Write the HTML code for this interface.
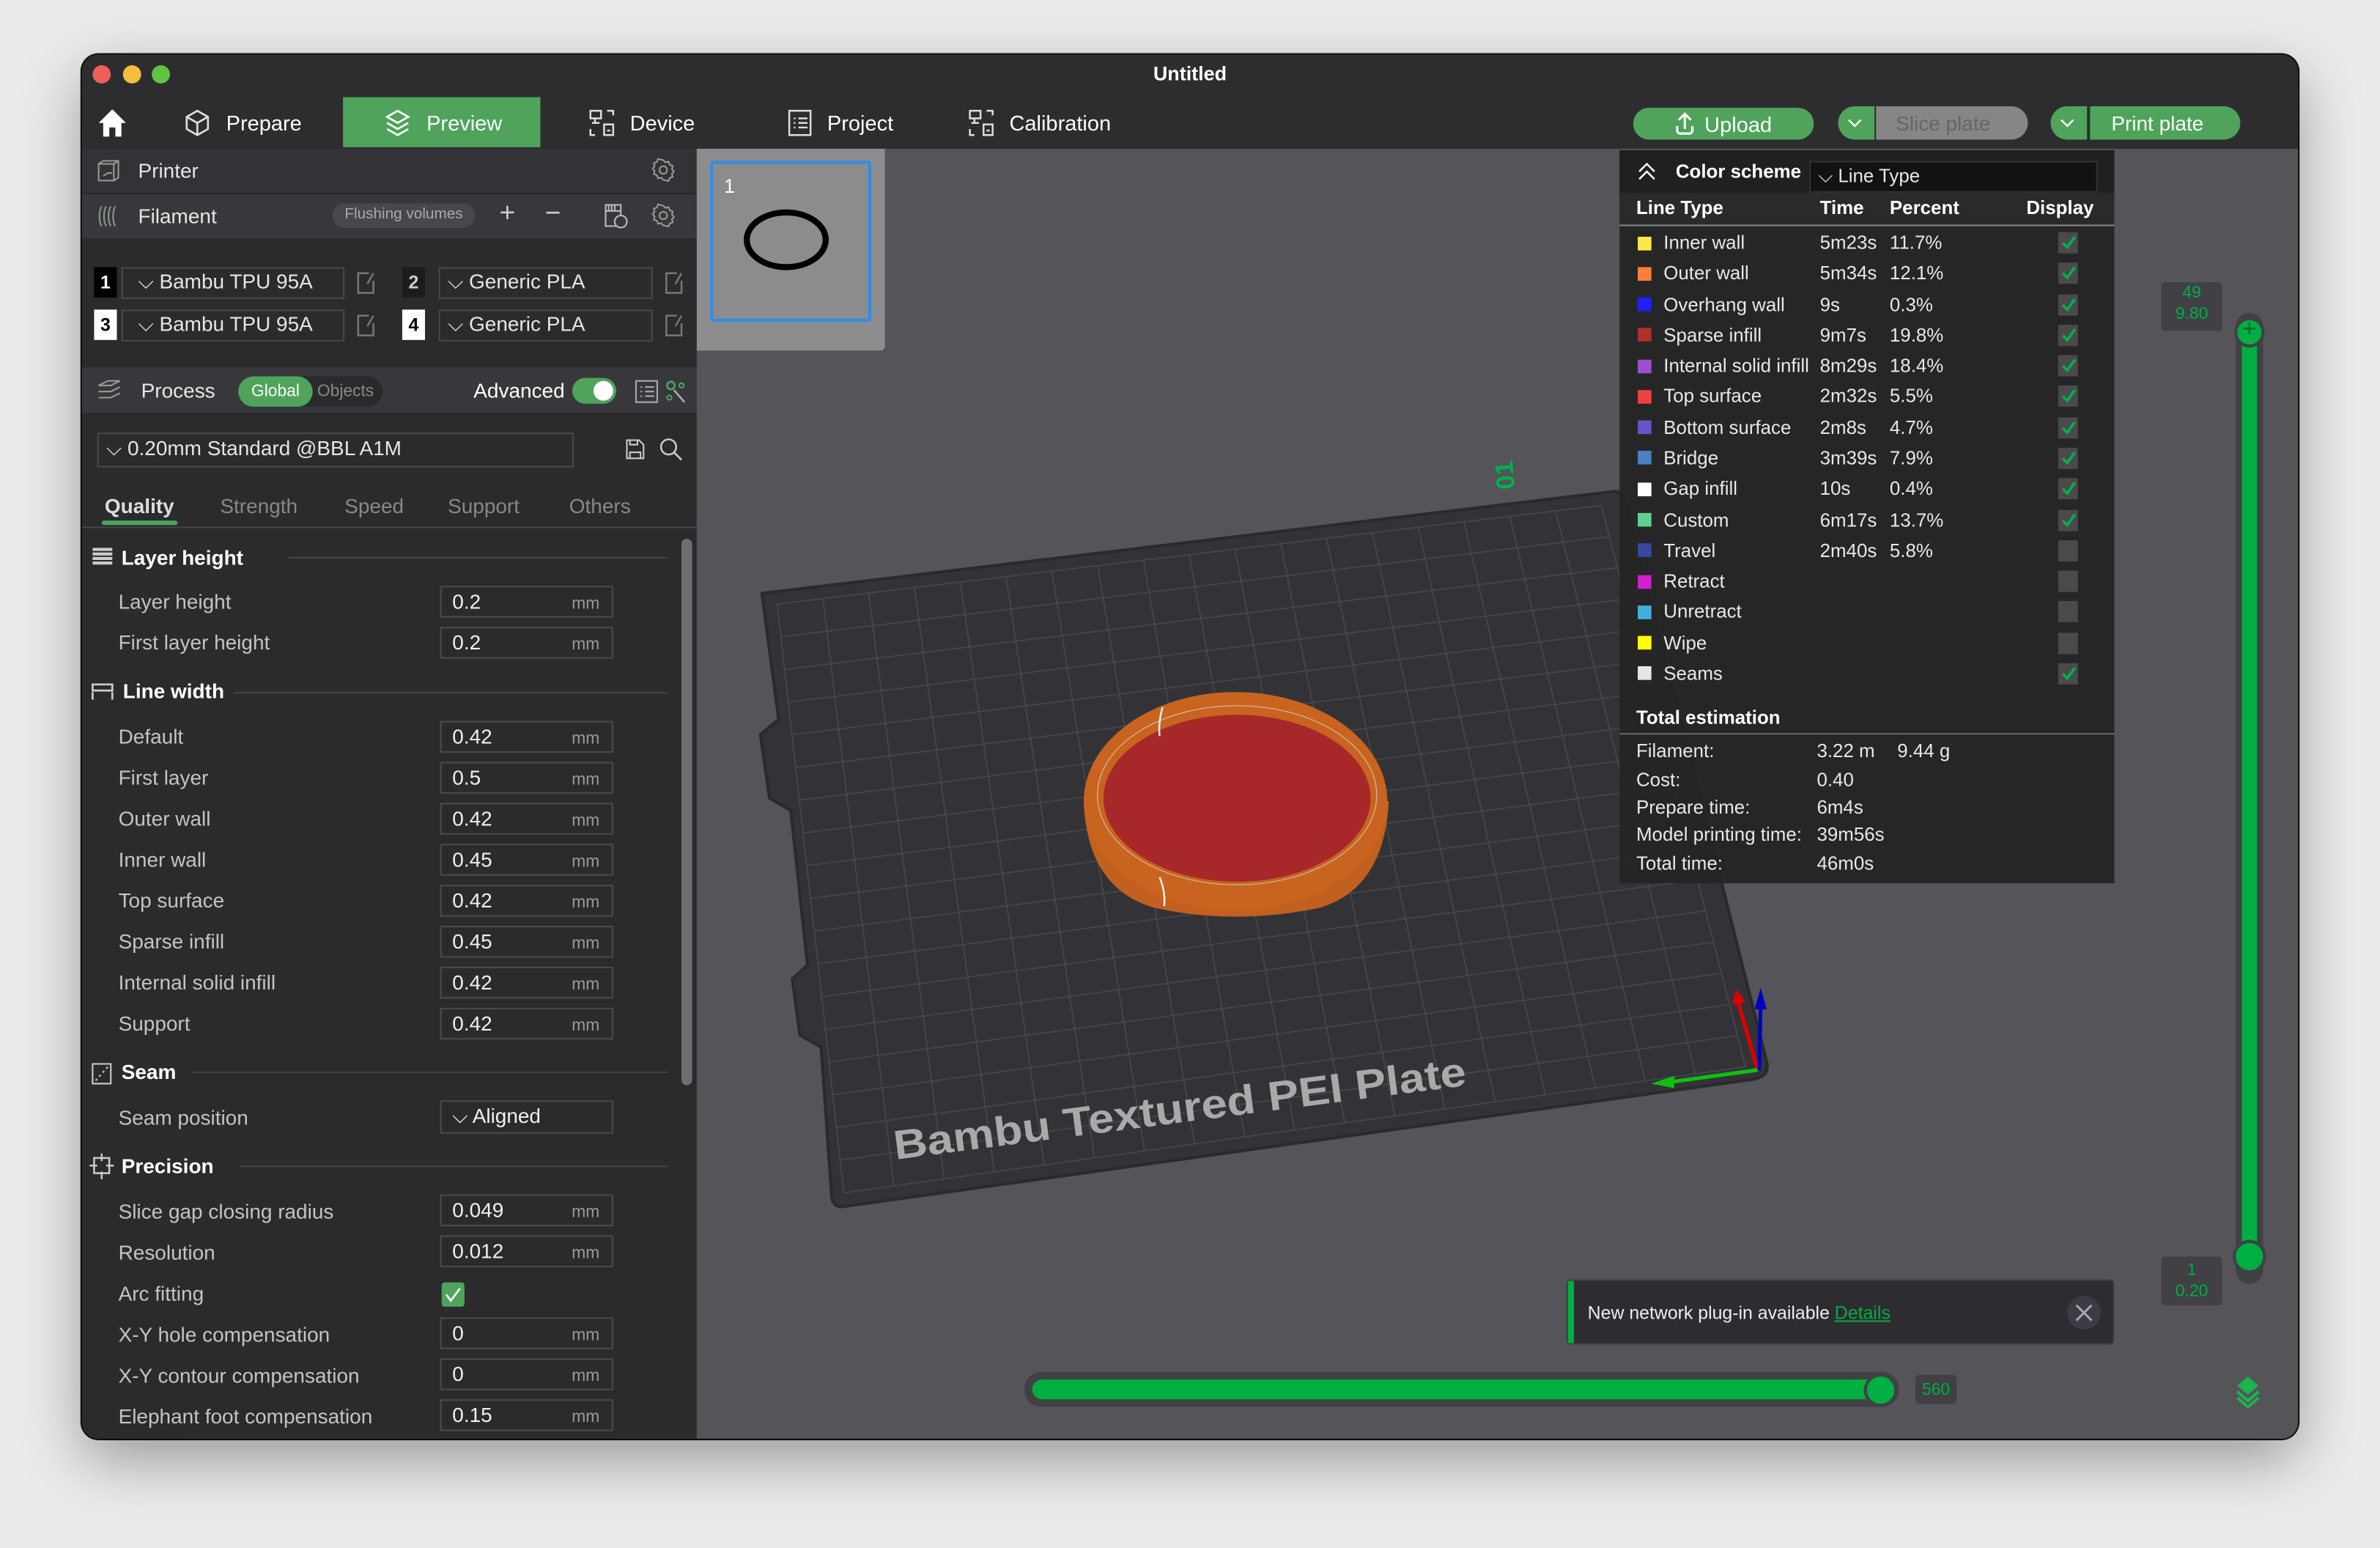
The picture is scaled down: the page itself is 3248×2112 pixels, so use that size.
<!DOCTYPE html>
<html><head><meta charset="utf-8">
<style>
html,body{margin:0;padding:0;width:3248px;height:2112px;overflow:hidden;background:#ebebeb;}
#s{position:absolute;left:0;top:0;width:1568px;height:1020px;transform:scale(2.0714,2.0706);transform-origin:0 0;font-family:"Liberation Sans",sans-serif;}
#win{position:absolute;left:54px;top:36px;width:1460px;height:912px;border-radius:11px;background:#2d2d30;overflow:hidden;box-shadow:0 14px 40px rgba(0,0,0,.35),0 0 0 1px #111;}
.a{position:absolute;}
.t{position:absolute;white-space:nowrap;line-height:16px;font-size:13px;color:#e6e6e6;}
.lbl{color:#c4c4c4;font-size:13.5px;}
.h{font-weight:bold;color:#fff;font-size:13.5px;}
.in{position:absolute;left:236px;width:114px;height:21px;border:1px solid #4a4a4e;box-sizing:border-box;}
.in b{position:absolute;left:7px;top:2px;font-weight:normal;font-size:13.5px;color:#f0f0f0;}
.in i{position:absolute;right:8px;top:5px;font-style:normal;font-size:11px;color:#9a9a9a;}
.sw{position:absolute;width:9px;height:9px;}
.cb{position:absolute;left:289px;width:13px;height:14px;background:#4a4a4a;}
.row{font-size:12.5px;color:#e8e8e8;}
</style></head><body>
<div id="s">
<div id="win">
 <div class="a" style="left:7px;top:7px;width:12px;height:12px;border-radius:6px;background:#ee5f57"></div>
 <div class="a" style="left:27px;top:7px;width:12px;height:12px;border-radius:6px;background:#f4be3e"></div>
 <div class="a" style="left:46px;top:7px;width:12px;height:12px;border-radius:6px;background:#5ec442"></div>
 <div class="t" style="left:0;width:1460px;text-align:center;top:5px;font-weight:bold;font-size:13px;color:#fff">Untitled</div>
 <svg class="a" style="left:10px;top:35px" width="20" height="20" viewBox="0 0 20 20"><path d="M10 1 L19 10 L16 10 L16 19 L12 19 L12 13 L8 13 L8 19 L4 19 L4 10 L1 10Z" fill="#fff"/></svg>
 <svg class="a" style="left:68px;top:36px" width="16" height="18" viewBox="0 0 16 18"><path d="M8 1 L15 5 L15 13 L8 17 L1 13 L1 5Z M1 5 L8 9 L15 5 M8 9 L8 17" fill="none" stroke="#ddd" stroke-width="1.3"/></svg>
 <div class="t" style="left:95px;top:37px;font-size:14px;color:#fff">Prepare</div>
 <div class="a" style="left:172px;top:28px;width:130px;height:33px;background:#4fa35b"></div>
 <svg class="a" style="left:200px;top:36px" width="16" height="18" viewBox="0 0 16 18"><path d="M8 1 L15 5 L8 9 L1 5Z M1 9 L8 13 L15 9 M1 13 L8 17 L15 13" fill="none" stroke="#fff" stroke-width="1.3"/></svg>
 <div class="t" style="left:227px;top:37px;font-size:14px;color:#fff">Preview</div>
 <svg class="a" style="left:334px;top:36px" width="18" height="18" viewBox="0 0 18 18"><path d="M1 1h7v5H1z M4 6v3 M2 9h5 M12 1h4v3 M1 13v4h3 M10 10h6v7h-6z M12 14h2" fill="none" stroke="#ddd" stroke-width="1.2"/></svg>
 <div class="t" style="left:361px;top:37px;font-size:14px;color:#fff">Device</div>
 <svg class="a" style="left:465px;top:36px" width="16" height="18" viewBox="0 0 16 18"><path d="M1 1h14v16H1z M4 6h1 M7 6h6 M4 9h1 M7 9h6 M4 12h1 M7 12h6" fill="none" stroke="#ddd" stroke-width="1.2"/></svg>
 <div class="t" style="left:491px;top:37px;font-size:14px;color:#fff">Project</div>
 <svg class="a" style="left:584px;top:36px" width="18" height="18" viewBox="0 0 18 18"><path d="M1 1h7v5H1z M4 6v3 M2 9h5 M12 1h4v3 M1 13v4h3 M10 10h6v7h-6z M12 14h2" fill="none" stroke="#ddd" stroke-width="1.2"/></svg>
 <div class="t" style="left:611px;top:37px;font-size:14px;color:#fff">Calibration</div>
 <div class="a" style="left:1022px;top:35px;width:119px;height:21px;border-radius:11px;background:#4fa35b"></div>
 <svg class="a" style="left:1049px;top:37px" width="14" height="16" viewBox="0 0 14 16"><path d="M7 12V2 M3 6L7 2L11 6 M2 10v3a2 2 0 0 0 2 2h6a2 2 0 0 0 2-2v-3" fill="none" stroke="#fff" stroke-width="1.5"/></svg>
 <div class="t" style="left:1069px;top:38px;font-size:14px;color:#fff">Upload</div>
 <div class="a" style="left:1157px;top:34px;width:24px;height:22px;border-radius:11px 0 0 11px;background:#4fa35b"></div>
 <div class="a" style="left:1182px;top:34px;width:100px;height:22px;border-radius:0 11px 11px 0;background:#868686"></div>
 <div class="t" style="left:1195px;top:38px;font-size:13.5px;color:#666">Slice plate</div>
 <div class="a" style="left:1297px;top:34px;width:24px;height:22px;border-radius:11px 0 0 11px;background:#4fa35b"></div>
 <div class="a" style="left:1323px;top:34px;width:99px;height:22px;border-radius:0 11px 11px 0;background:#4fa35b"></div>
 <div class="t" style="left:1337px;top:38px;font-size:13.5px;color:#fff">Print plate</div>
 <svg class="a" style="left:1163px;top:41px" width="10" height="8"><path d="M1 2L5 6L9 2" fill="none" stroke="#fff" stroke-width="1.2"/></svg>
 <svg class="a" style="left:1303px;top:41px" width="10" height="8"><path d="M1 2L5 6L9 2" fill="none" stroke="#fff" stroke-width="1.2"/></svg>

 <div class="a" style="left:0;top:62px;width:405px;height:850px;background:#2b2b2e">
  <div class="a" style="left:0;top:0;width:405px;height:29px;background:#333337;border-bottom:1px solid #26262a"></div>
  <svg class="a" style="left:10px;top:7px" width="15" height="15" viewBox="0 0 15 15"><path d="M1 3h10v11H1z M1 3l3-2h10v11l-3 2 M11 3l3-2 M4 11l3-2h3" fill="none" stroke="#999" stroke-width="1"/></svg>
  <div class="t" style="left:37px;top:7px;font-size:13.5px">Printer</div>
  <svg class="a" style="left:375px;top:6px" width="16" height="16" viewBox="0 0 16 16"><circle cx="8" cy="8" r="2.5" fill="none" stroke="#999"/><path d="M8 1.5l1.5 1.5 2-.5.7 2 2 .8-.5 2 1.3 1.7-1.3 1.5.5 2-2 .8-.7 2-2-.5L8 14.5 6.5 13l-2 .5-.7-2-2-.8.5-2L1 7l1.3-1.5-.5-2 2-.8.7-2 2 .5z" fill="none" stroke="#999" stroke-width="1"/></svg>
  <div class="a" style="left:0;top:30px;width:405px;height:29px;background:#38383c"></div>
  <svg class="a" style="left:10px;top:37px" width="16" height="15" viewBox="0 0 16 15"><path d="M3 1c-2 3-2 10 0 13 M6 1c-2 3-2 10 0 13 M9 1c-2 3-2 10 0 13 M12 1c-2 3-2 10 0 13" fill="none" stroke="#8a9a8a" stroke-width="1"/></svg>
  <div class="t" style="left:37px;top:37px;font-size:13.5px">Filament</div>
  <div class="a" style="left:165px;top:36px;width:94px;height:16px;border-radius:8px;background:#47474c"></div>
  <div class="t" style="left:165px;width:94px;text-align:center;top:36px;font-size:10px;color:#aaa">Flushing volumes</div>
  <div class="t" style="left:275px;top:34px;font-size:18px;color:#ccc">+</div>
  <div class="t" style="left:305px;top:34px;font-size:18px;color:#ccc">−</div>
  <svg class="a" style="left:343px;top:36px" width="17" height="17" viewBox="0 0 17 17"><path d="M2 1h10v14H2z M2 5h10 M4 1v4 M6 1v4 M8 1v4" fill="none" stroke="#bbb" stroke-width="1"/><circle cx="12" cy="12" r="4" fill="#38383c" stroke="#bbb"/></svg>
  <svg class="a" style="left:375px;top:36px" width="16" height="16" viewBox="0 0 16 16"><circle cx="8" cy="8" r="2.5" fill="none" stroke="#999"/><path d="M8 1.5l1.5 1.5 2-.5.7 2 2 .8-.5 2 1.3 1.7-1.3 1.5.5 2-2 .8-.7 2-2-.5L8 14.5 6.5 13l-2 .5-.7-2-2-.8.5-2L1 7l1.3-1.5-.5-2 2-.8.7-2 2 .5z" fill="none" stroke="#999" stroke-width="1"/></svg>
  <div class="a" style="left:8px;top:78px;width:15px;height:20px;background:#000"></div>
  <div class="t" style="left:8px;width:15px;text-align:center;top:80px;font-size:12px;color:#fff;font-weight:bold">1</div>
  <div class="a" style="left:26px;top:78px;width:147px;height:21px;border:1px solid #48484c;box-sizing:border-box"></div>
  <div class="t" style="left:37px;top:80px;font-size:13.5px">⌵ Bambu TPU 95A</div>
  <div class="a" style="left:211px;top:78px;width:15px;height:20px;background:#1c1c1c"></div>
  <div class="t" style="left:211px;width:15px;text-align:center;top:80px;font-size:12px;color:#ccc;font-weight:bold">2</div>
  <div class="a" style="left:235px;top:78px;width:141px;height:21px;border:1px solid #48484c;box-sizing:border-box"></div>
  <div class="t" style="left:241px;top:80px;font-size:13.5px">⌵ Generic PLA</div>
  <div class="a" style="left:8px;top:106px;width:15px;height:20px;background:#fff"></div>
  <div class="t" style="left:8px;width:15px;text-align:center;top:108px;font-size:12px;color:#000;font-weight:bold">3</div>
  <div class="a" style="left:26px;top:106px;width:147px;height:21px;border:1px solid #48484c;box-sizing:border-box"></div>
  <div class="t" style="left:37px;top:108px;font-size:13.5px">⌵ Bambu TPU 95A</div>
  <div class="a" style="left:211px;top:106px;width:15px;height:20px;background:#fff"></div>
  <div class="t" style="left:211px;width:15px;text-align:center;top:108px;font-size:12px;color:#000;font-weight:bold">4</div>
  <div class="a" style="left:235px;top:106px;width:141px;height:21px;border:1px solid #48484c;box-sizing:border-box"></div>
  <div class="t" style="left:241px;top:108px;font-size:13.5px">⌵ Generic PLA</div>
  <svg class="a" style="left:180px;top:81px" width="14" height="15"><path d="M9 1H2v13h10V6 M12 1L8 8" fill="none" stroke="#777" stroke-width="1.2"/></svg>
  <svg class="a" style="left:383px;top:81px" width="14" height="15"><path d="M9 1H2v13h10V6 M12 1L8 8" fill="none" stroke="#777" stroke-width="1.2"/></svg>
  <svg class="a" style="left:180px;top:109px" width="14" height="15"><path d="M9 1H2v13h10V6 M12 1L8 8" fill="none" stroke="#777" stroke-width="1.2"/></svg>
  <svg class="a" style="left:383px;top:109px" width="14" height="15"><path d="M9 1H2v13h10V6 M12 1L8 8" fill="none" stroke="#777" stroke-width="1.2"/></svg>
  <div class="a" style="left:0;top:144px;width:405px;height:30px;background:#38383c"></div>
  <svg class="a" style="left:10px;top:152px" width="16" height="15" viewBox="0 0 16 15"><path d="M1 4l6-3h8l-6 3z M1 8h8l6-3 M1 12h8l6-3" fill="none" stroke="#999" stroke-width="1"/></svg>
  <div class="t" style="left:39px;top:152px;font-size:13.5px">Process</div>
  <div class="a" style="left:103px;top:150px;width:95px;height:20px;border-radius:10px;background:#2a2a2d"></div>
  <div class="a" style="left:103px;top:150px;width:49px;height:20px;border-radius:10px;background:#4fa35b"></div>
  <div class="t" style="left:103px;width:49px;text-align:center;top:152px;font-size:11px;color:#fff">Global</div>
  <div class="t" style="left:155px;top:152px;font-size:11px;color:#888">Objects</div>
  <div class="t" style="left:258px;top:152px;font-size:13.5px;color:#fff">Advanced</div>
  <div class="a" style="left:323px;top:151px;width:29px;height:17px;border-radius:9px;background:#4fa35b"></div>
  <div class="a" style="left:337px;top:153px;width:13px;height:13px;border-radius:7px;background:#fff"></div>
  <svg class="a" style="left:364px;top:152px" width="16" height="16"><path d="M1 1h14v14H1z M4 5h1 M7 5h6 M4 8h1 M7 8h6 M4 11h1 M7 11h6" fill="none" stroke="#aaa"/></svg>
  <svg class="a" style="left:384px;top:152px" width="14" height="16"><circle cx="4" cy="4" r="2.5" fill="none" stroke="#4fa35b" stroke-width="1.3"/><circle cx="11" cy="4" r="1.5" fill="none" stroke="#4fa35b"/><circle cx="3" cy="12" r="1.5" fill="none" stroke="#4fa35b"/><path d="M6 7l7 8" stroke="#aaa" stroke-width="1.3"/></svg>
  <div class="a" style="left:10px;top:187px;width:314px;height:23px;border:1px solid #48484c;box-sizing:border-box"></div>
  <div class="t" style="left:16px;top:190px;font-size:13.5px">⌵ 0.20mm Standard @BBL A1M</div>
  <svg class="a" style="left:358px;top:191px" width="13" height="14"><path d="M1 1h8l3 3v9H1z M3 13V9h7v4 M3 1v3h5V1" fill="none" stroke="#ccc"/></svg>
  <svg class="a" style="left:380px;top:190px" width="16" height="16"><circle cx="6.5" cy="6.5" r="5" fill="none" stroke="#ccc" stroke-width="1.2"/><path d="M10 10l5 5" stroke="#ccc" stroke-width="1.3"/></svg>
  <div class="t" style="left:15px;top:228px;font-size:13.5px;color:#ddd;font-weight:bold">Quality</div>
  <div class="a" style="left:13px;top:245px;width:50px;height:3px;border-radius:2px;background:#4fa35b"></div>
  <div class="t" style="left:91px;top:228px;font-size:13.5px;color:#888">Strength</div>
  <div class="t" style="left:173px;top:228px;font-size:13.5px;color:#888">Speed</div>
  <div class="t" style="left:241px;top:228px;font-size:13.5px;color:#888">Support</div>
  <div class="t" style="left:321px;top:228px;font-size:13.5px;color:#888">Others</div>
  <div class="a" style="left:0;top:249px;width:405px;height:1px;background:#46464a"></div>
  <div class="a" style="left:395px;top:257px;width:7px;height:360px;border-radius:4px;background:#6e6e72"></div>
 </div>

 <div class="a" style="left:0;top:0;width:405px;height:912px">
  <svg class="a" style="left:6px;top:324px" width="15" height="14"><path d="M1 2h13M1 5h13M1 8h13M1 11h13" stroke="#ccc" stroke-width="2"/></svg>
  <div class="t h" style="left:26px;top:324px">Layer height</div>
  <div class="a" style="left:136px;top:331px;width:250px;height:1px;background:#444"></div>
  <div class="t lbl" style="left:24px;top:353px">Layer height</div><div class="in" style="top:350px"><b>0.2</b><i>mm</i></div>
  <div class="t lbl" style="left:24px;top:380px">First layer height</div><div class="in" style="top:377px"><b>0.2</b><i>mm</i></div>
  <svg class="a" style="left:6px;top:414px" width="15" height="12"><path d="M1 1h13v4H1z M1 6v5 M14 6v5" fill="none" stroke="#ccc" stroke-width="1.3"/></svg>
  <div class="t h" style="left:27px;top:412px">Line width</div>
  <div class="a" style="left:100px;top:420px;width:286px;height:1px;background:#444"></div>
  <div class="t lbl" style="left:24px;top:442px">Default</div><div class="in" style="top:439px"><b>0.42</b><i>mm</i></div>
  <div class="t lbl" style="left:24px;top:469px">First layer</div><div class="in" style="top:466px"><b>0.5</b><i>mm</i></div>
  <div class="t lbl" style="left:24px;top:496px">Outer wall</div><div class="in" style="top:493px"><b>0.42</b><i>mm</i></div>
  <div class="t lbl" style="left:24px;top:523px">Inner wall</div><div class="in" style="top:520px"><b>0.45</b><i>mm</i></div>
  <div class="t lbl" style="left:24px;top:550px">Top surface</div><div class="in" style="top:547px"><b>0.42</b><i>mm</i></div>
  <div class="t lbl" style="left:24px;top:577px">Sparse infill</div><div class="in" style="top:574px"><b>0.45</b><i>mm</i></div>
  <div class="t lbl" style="left:24px;top:604px">Internal solid infill</div><div class="in" style="top:601px"><b>0.42</b><i>mm</i></div>
  <div class="t lbl" style="left:24px;top:631px">Support</div><div class="in" style="top:628px"><b>0.42</b><i>mm</i></div>
  <svg class="a" style="left:6px;top:664px" width="14" height="15"><path d="M1 1h12v13H1z" fill="none" stroke="#ccc"/><path d="M3 12L11 3" stroke="#ccc" stroke-dasharray="1.5 2"/></svg>
  <div class="t h" style="left:26px;top:663px">Seam</div>
  <div class="a" style="left:72px;top:670px;width:314px;height:1px;background:#444"></div>
  <div class="t lbl" style="left:24px;top:693px">Seam position</div>
  <div class="in" style="top:689px;height:22px"><b>⌵ Aligned</b></div>
  <svg class="a" style="left:5px;top:724px" width="16" height="17"><path d="M3 3h10v10H3z M8 0v5 M8 12v5 M0 8h5 M11 8h5" fill="none" stroke="#ccc" stroke-width="1.2"/></svg>
  <div class="t h" style="left:26px;top:725px">Precision</div>
  <div class="a" style="left:104px;top:732px;width:282px;height:1px;background:#444"></div>
  <div class="t lbl" style="left:24px;top:755px">Slice gap closing radius</div><div class="in" style="top:751px"><b>0.049</b><i>mm</i></div>
  <div class="t lbl" style="left:24px;top:782px">Resolution</div><div class="in" style="top:778px"><b>0.012</b><i>mm</i></div>
  <div class="t lbl" style="left:24px;top:809px">Arc fitting</div>
  <div class="a" style="left:237px;top:809px;width:15px;height:16px;border-radius:2px;background:#4fa35b"></div>
  <svg class="a" style="left:239px;top:812px" width="11" height="10"><path d="M1 5l3 4 6-8" fill="none" stroke="#fff" stroke-width="1.3"/></svg>
  <div class="t lbl" style="left:24px;top:836px">X-Y hole compensation</div><div class="in" style="top:832px"><b>0</b><i>mm</i></div>
  <div class="t lbl" style="left:24px;top:863px">X-Y contour compensation</div><div class="in" style="top:859px"><b>0</b><i>mm</i></div>
  <div class="t lbl" style="left:24px;top:890px">Elephant foot compensation</div><div class="in" style="top:886px"><b>0.15</b><i>mm</i></div>
 </div>

 <div class="a" style="left:405px;top:62px;width:1055px;height:850px;background:#545459;overflow:hidden">
  <div class="a" style="left:0;top:0;width:124px;height:133px;background:#8c8c8e;border-radius:0 0 3px 0"></div>
  <div class="a" style="left:9px;top:8px;width:106px;height:106px;border:2px solid #2d8fe8;box-sizing:border-box;border-radius:2px"></div>
  <div class="t" style="left:18px;top:17px;font-size:13px;color:#fff">1</div>
  <svg class="a" style="left:30px;top:38px" width="60" height="45"><ellipse cx="29" cy="22" rx="26" ry="18" fill="none" stroke="#000" stroke-width="4"/></svg>
 </div>
 <svg class="a" id="pl" style="left:-54px;top:-36px" width="1568" height="1020" viewBox="0 0 1568 1020">
  <path d="M502,391 L1062,324 Q1069,323 1071,330 L1164,700 Q1166,709 1156,711 L556,795 Q549,796 548,789 L541,690 L527,682 L522,645 L532,636 L521,534 L507,526 L501,484 L513,474 Z" fill="#333337" stroke="#2a2a2c" stroke-width="2"/>
  <g id="grid" stroke="#48484c" stroke-width="0.8"></g>
  <text x="0" y="0" transform="translate(590,764) rotate(-7.4)" font-family="Liberation Sans,sans-serif" font-weight="bold" font-size="27" fill="#a9a9ab" textLength="380" lengthAdjust="spacingAndGlyphs">Bambu Textured PEI Plate</text>
  <text x="0" y="0" transform="translate(998,322) rotate(-95)" font-family="Liberation Sans,sans-serif" font-weight="bold" font-size="17" fill="#00b04a">01</text>
  <path d="M714,528 Q716,585 760,598 Q814,610 870,598 Q912,585 915,528 Z" fill="#c2601f"/>
  <ellipse cx="814" cy="528" rx="100" ry="72" fill="#c8641f"/>
  <ellipse cx="815" cy="526" rx="88" ry="55" fill="#a8282a"/>
  <ellipse cx="815" cy="524" rx="92" ry="59" fill="none" stroke="#d9d9d9" stroke-width="0.6" opacity="0.7"/>
  <path d="M766,466 Q763,476 764,485" stroke="#eee" stroke-width="1.2" fill="none"/>
  <path d="M764,578 Q768,588 767,597" stroke="#eee" stroke-width="1.2" fill="none"/>
  <path d="M1158,705 L1145,660" stroke="#d00" stroke-width="2.5"/><path d="M1141,662 L1144,652 L1150,660Z" fill="#d00"/>
  <path d="M1159,705 L1160,662" stroke="#0000c0" stroke-width="2.5"/><path d="M1156,665 L1160,651 L1164,665Z" fill="#0000c0"/>
  <path d="M1158,705 L1100,713" stroke="#10c010" stroke-width="2.5"/><path d="M1103,709 L1088,714 L1103,717Z" fill="#10c010"/>
 </svg>

 <div class="a" style="left:1013px;top:63px;width:326px;height:483px;background:rgba(36,36,37,0.96)">
  <div class="a" style="left:0;top:0;width:326px;height:28px;background:#202021"></div>
  <svg class="a" style="left:12px;top:8px" width="12" height="12"><path d="M1 6L6 1L11 6 M1 11L6 6L11 11" fill="none" stroke="#fff" stroke-width="1.2"/></svg>
  <div class="t" style="left:37px;top:6px;font-weight:bold;font-size:12.5px;color:#fff">Color scheme</div>
  <div class="a" style="left:125px;top:7px;width:190px;height:21px;background:#121212;border:1px solid #333;box-sizing:border-box"></div>
  <div class="t" style="left:131px;top:9px;font-size:12.5px">⌵ Line Type</div>
  <div class="a" style="left:0;top:28px;width:326px;height:22px;background:#2a2a2b"></div>
  <div class="t" style="left:11px;top:30px;font-weight:bold;font-size:12.5px;color:#fff">Line Type</div>
  <div class="t" style="left:132px;top:30px;font-weight:bold;font-size:12.5px;color:#fff">Time</div>
  <div class="t" style="left:178px;top:30px;font-weight:bold;font-size:12.5px;color:#fff">Percent</div>
  <div class="t" style="left:268px;top:30px;font-weight:bold;font-size:12.5px;color:#fff">Display</div>
  <div class="a" style="left:0;top:49px;width:326px;height:1px;background:#888"></div>
  <div id="rows"></div>
  <div class="t" style="left:11px;top:366px;font-weight:bold;font-size:12.5px;color:#fff">Total estimation</div>
  <div class="a" style="left:0;top:384px;width:326px;height:1px;background:#666"></div>
  <div class="t row" style="left:11px;top:388px">Filament:</div><div class="t row" style="left:130px;top:388px">3.22 m</div><div class="t row" style="left:183px;top:388px">9.44 g</div>
  <div class="t row" style="left:11px;top:407px">Cost:</div><div class="t row" style="left:130px;top:407px">0.40</div>
  <div class="t row" style="left:11px;top:425px">Prepare time:</div><div class="t row" style="left:130px;top:425px">6m4s</div>
  <div class="t row" style="left:11px;top:443px">Model printing time:</div><div class="t row" style="left:130px;top:443px">39m56s</div>
  <div class="t row" style="left:11px;top:462px">Total time:</div><div class="t row" style="left:130px;top:462px">46m0s</div>
 </div>

 <div class="a" style="left:1419px;top:170px;width:18px;height:640px;border-radius:9px;background:#404045"></div>
 <div class="a" style="left:1423px;top:180px;width:10px;height:615px;background:#00ae42"></div>
 <div class="a" style="left:1418px;top:173px;width:20px;height:20px;border-radius:10px;background:#00ae42;border:2px solid #404045;box-sizing:border-box"></div>
 <div class="t" style="left:1420px;top:173px;width:16px;text-align:center;font-size:16px;color:#0c6a2a;line-height:18px">+</div>
 <div class="a" style="left:1417px;top:781px;width:22px;height:22px;border-radius:11px;background:#00ae42;border:2px solid #404045;box-sizing:border-box"></div>
 <div class="a" style="left:1370px;top:150px;width:40px;height:32px;background:#404045;border-radius:2px"></div>
 <div class="t" style="left:1370px;width:40px;text-align:center;top:150px;font-size:11px;color:#00ae42;line-height:14px">49<br>9.80</div>
 <div class="a" style="left:1370px;top:792px;width:40px;height:32px;background:#404045;border-radius:2px"></div>
 <div class="t" style="left:1370px;width:40px;text-align:center;top:794px;font-size:11px;color:#00ae42;line-height:14px">1<br>0.20</div>

 <div class="a" style="left:978px;top:807px;width:361px;height:43px;border-radius:3px;background:#2d2d31;border:1px solid #3c3c42;box-sizing:border-box"></div>
 <div class="a" style="left:979px;top:808px;width:4px;height:41px;background:#00ae42"></div>
 <div class="t" style="left:992px;top:821px;font-size:12px;color:#eee">New network plug-in available <span style="color:#00ae42;text-decoration:underline">Details</span></div>
 <div class="a" style="left:1308px;top:818px;width:22px;height:22px;border-radius:11px;background:#3c3c44"></div>
 <svg class="a" style="left:1312px;top:822px" width="14" height="14"><path d="M2 2L12 12M12 2L2 12" stroke="#aaa" stroke-width="1.4"/></svg>

 <div class="a" style="left:621px;top:868px;width:576px;height:23px;border-radius:11px;background:#404045"></div>
 <div class="a" style="left:626px;top:873px;width:560px;height:13px;border-radius:7px;background:#00ae42"></div>
 <div class="a" style="left:1174px;top:869px;width:22px;height:22px;border-radius:11px;background:#00ae42;border:2px solid #404045;box-sizing:border-box"></div>
 <div class="a" style="left:1208px;top:870px;width:27px;height:19px;background:#404045;border-radius:2px"></div>
 <div class="t" style="left:1208px;width:27px;text-align:center;top:872px;font-size:11px;color:#00ae42">560</div>
 <svg class="a" style="left:1416px;top:870px" width="22" height="22" viewBox="0 0 22 22"><path d="M11 1L18 7L11 13L4 7Z" fill="#1db34d"/><path d="M4 11L11 17L18 11 M4 15L11 21L18 15" fill="none" stroke="#1db34d" stroke-width="2"/></svg>
</div>
</div>
<script>
(function(){
 var TL=[512,398],TR=[1055,333],BR=[1150,703],BL=[556,786];
 function P(u,v){var x=(1-u)*(1-v)*TL[0]+u*(1-v)*TR[0]+u*v*BR[0]+(1-u)*v*BL[0];var y=(1-u)*(1-v)*TL[1]+u*(1-v)*TR[1]+u*v*BR[1]+(1-u)*v*BL[1];return x.toFixed(1)+','+y.toFixed(1);}
 var g=document.getElementById('grid'),s='',N=18,M=18;
 for(var i=0;i<=N;i++){var u=i/N;s+='<path d="M'+P(u,0)+' L'+P(u,1)+'"/>';}
 for(var j=0;j<=M;j++){var v=j/M;s+='<path d="M'+P(0,v)+' L'+P(1,v)+'"/>';}
 g.innerHTML=s;
 var R=[["#ffe84a","Inner wall","5m23s","11.7%",1],["#ff7f3a","Outer wall","5m34s","12.1%",1],["#1f1fff","Overhang wall","9s","0.3%",1],["#b0302a","Sparse infill","9m7s","19.8%",1],["#9a4fd0","Internal solid infill","8m29s","18.4%",1],["#f04040","Top surface","2m32s","5.5%",1],["#6456c8","Bottom surface","2m8s","4.7%",1],["#4b80c0","Bridge","3m39s","7.9%",1],["#ffffff","Gap infill","10s","0.4%",1],["#5ed192","Custom","6m17s","13.7%",1],["#3848a0","Travel","2m40s","5.8%",0],["#d020d0","Retract","","",0],["#40b0d8","Unretract","","",0],["#ffff00","Wipe","","",0],["#e6e6e6","Seams","","",1]];
 var h='';
 for(var k=0;k<R.length;k++){var y=61+k*20.28;var r=R[k];
  h+='<div class="sw" style="left:12px;top:'+(y-4.5)+'px;background:'+r[0]+'"></div>';
  h+='<div class="t row" style="left:29px;top:'+(y-8)+'px">'+r[1]+'</div>';
  h+='<div class="t row" style="left:132px;top:'+(y-8)+'px">'+r[2]+'</div>';
  h+='<div class="t row" style="left:178px;top:'+(y-8)+'px">'+r[3]+'</div>';
  h+='<div class="cb" style="top:'+(y-7)+'px"></div>';
  if(r[4])h+='<svg class="a" style="left:291px;top:'+(y-5)+'px" width="10" height="10"><path d="M1 5l3 3 5-7" fill="none" stroke="#00b04a" stroke-width="1.8"/></svg>';
 }
 document.getElementById('rows').innerHTML=h;
})();
</script>
</body></html>
